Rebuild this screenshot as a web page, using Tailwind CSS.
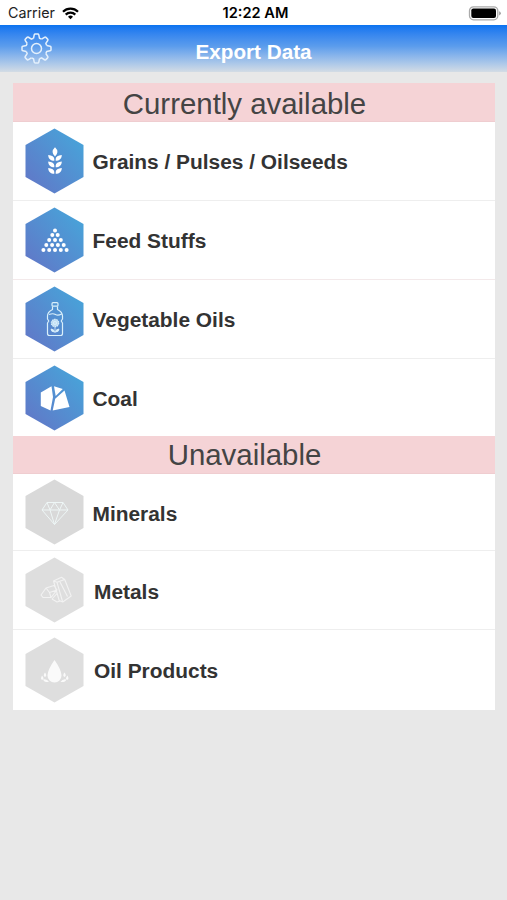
<!DOCTYPE html>
<html lang="en">
<head>
<meta charset="utf-8">
<title>Export Data</title>
<script src="https://cdn.jsdelivr.net/npm/@tailwindcss/browser@4"></script>
</head>
<body class="h-[900px] overflow-hidden bg-[#e8e8e8] font-['Liberation_Sans',sans-serif] text-[#333]">
<svg class="absolute h-0 w-0" aria-hidden="true">
  <defs>
    <linearGradient id="blue" x1="0" y1="1" x2="1" y2="0"><stop offset=".1" stop-color="#6079c8"/><stop offset=".9" stop-color="#48a3d9"/></linearGradient>
    <path id="hex" d="M29.500 .5 58.500 17v32L29.500 65.500.5 49V17Z"/>
    <path id="tooth" d="M-3-10.200-2.300-13.600Q-2.100-14.500-1.200-14.500H1.200Q2.100-14.500 2.300-13.600L3-10.200 5.090-9.330"/>
    <path id="leaf" d="M.7 3C.7.600 3-.800 6.800-1.100 6.800 2.600 4.300 4.700.7 4.700ZM-.7 3C-.7.600-3-.800-6.800-1.100-6.800 2.600-4.300 4.700-.7 4.700Z"/>
  </defs>
</svg>

<header class="grid h-[25px] grid-cols-3 items-center bg-white pt-[2px] pr-[6px] pl-2 font-['Inter',sans-serif] text-black">
  <div class="flex items-center gap-[7px] text-[14.300px] leading-none text-[#222]">
    <span>Carrier</span>
    <svg width="17" height="13" viewBox="0 0 17 13" fill="none" stroke="#000" stroke-width="2.200"><path d="M1 4.700a10.700 10.700 0 0 1 15 0M3.700 7.600a6.800 6.800 0 0 1 9.600 0"/><path d="M8.500 12.300 6 9.800a3.600 3.600 0 0 1 5 0Z" fill="#000" stroke="none"/></svg>
  </div>
  <div class="pl-[2px] text-center text-[14.600px] leading-none font-semibold whitespace-nowrap"><span>12:22 AM</span></div>
  <svg class="justify-self-end" width="33" height="15" viewBox="0 0 33 15"><rect x="1.500" y=".8" width="28.300" height="13" rx="4" fill="#fff" stroke="#aaa" stroke-width="1.300"/><rect x="3.300" y="2.600" width="24.700" height="9.500" rx="2" fill="#000"/><path d="M31.200 5.200q1.600.5 1.600 2.100t-1.600 2.100Z" fill="#999"/></svg>
</header>

<nav class="grid h-[47px] grid-cols-[73px_1fr_73px] items-center bg-linear-to-b from-[#0873f0] via-[#5b9cec] via-45% to-[#d3dce5]">
  <svg class="ml-[21px]" width="31" height="31" viewBox="-15.500 -15.500 31 31" fill="none" stroke="#e4f0fc" stroke-width="1.500" stroke-linejoin="round">
    <use href="#tooth"/><use href="#tooth" transform="rotate(45)"/><use href="#tooth" transform="rotate(90)"/><use href="#tooth" transform="rotate(135)"/><use href="#tooth" transform="rotate(180)"/><use href="#tooth" transform="rotate(225)"/><use href="#tooth" transform="rotate(270)"/><use href="#tooth" transform="rotate(315)"/>
    <circle r="5"/>
  </svg>
  <h1 class="pt-[6px] text-center text-[20.700px] leading-6 font-bold text-white">Export Data</h1>
</nav>

<main class="mx-auto mt-[11px] w-[482px] bg-white text-[20.900px] leading-6 font-bold">
  <h2 class="h-[39px] border-b border-[#efcdd0] bg-[#f5d3d6] pt-[4px] pr-[18px] text-center text-[29.400px] leading-[34px] font-normal text-[#444]">Currently available</h2>
  <ul>
    <li class="flex h-[79px] items-center gap-[9px] border-b border-[#eee] pb-px pl-[12px]">
      <svg width="59" height="66" viewBox="0 0 59 66"><use href="#hex" fill="url(#blue)"/><g fill="#fff"><path d="M30 19.200Q34.800 23.700 30 28.500 25.200 23.700 30 19.200Z"/><use href="#leaf" x="30" y="28"/><use href="#leaf" x="30" y="34.500"/><use href="#leaf" x="30" y="41"/></g></svg>
      <span class="pt-[2px]">Grains / Pulses / Oilseeds</span>
    </li>
    <li class="flex h-[79px] items-center gap-[9px] border-b border-[#f3e9ea] pb-px pl-[12px]">
      <svg width="59" height="66" viewBox="0 0 59 66"><use href="#hex" fill="url(#blue)"/><g fill="none" stroke="#fff" stroke-width="4" stroke-linecap="round"><path d="M30 23.500h.01M27.300 28h.01M32.700 28h.01M24.200 33h.01M30 33h.01M35.800 33h.01M21.300 38h.01M27.100 38h.01M32.900 38h.01M38.700 38h.01M18.400 43h.01M24.200 43h.01M30 43h.01M35.800 43h.01M41.600 43h.01"/></g></svg>
      <span class="pt-[2px]">Feed Stuffs</span>
    </li>
    <li class="flex h-[79px] items-center gap-[9px] border-b border-[#eee] pb-px pl-[12px]">
      <svg width="59" height="66" viewBox="0 0 59 66" fill="none" stroke="#d9effa" stroke-width="1.200" stroke-linejoin="round"><use href="#hex" fill="url(#blue)" stroke="none"/><rect x="27" y="16.700" width="6" height="3.500" rx="1"/><path d="M27.500 20.500v3Q22.500 26 22.500 30v3l1.300 2-1.300 2v10.500q0 2 2 2h11q2 0 2-2V37l-1.300-2 1.300-2v-3q0-4-5-6.500v-3M24 28.500q4-1.500 6.500 0t6-.5"/><circle cx="30" cy="37" r="3.700" fill="#bdddf4" stroke-dasharray="1.500 .8"/><circle cx="30" cy="37" r="1.500"/><path d="M30 41v6M29.500 46q-3.500 0-3.500-3 3 0 3.500 3ZM30.500 46q3.500 0 3.500-3-3 0-3.500 3Z" fill="#d9effa" stroke-width=".8"/></svg>
      <span class="pt-[2px]">Vegetable Oils</span>
    </li>
    <li class="flex h-[77px] items-center gap-[9px] pl-[12px]">
      <svg width="59" height="66" viewBox="0 0 59 66"><use href="#hex" fill="url(#blue)"/><path fill="#fff" d="M15.800 27.500 26.500 21.200 28 32 25.500 45.500 15.800 41ZM29 21.200 37.800 24 30.700 31ZM39.500 25.500 44.500 42 27.700 45.600 30.200 33.700Z"/></svg>
      <span class="pt-[2px]">Coal</span>
    </li>
  </ul>
  <h2 class="h-[38px] border-b border-[#efcdd0] bg-[#f5d3d6] pt-[2px] pr-[18px] text-center text-[29.400px] leading-[34px] font-normal text-[#444]">Unavailable</h2>
  <ul>
    <li class="flex h-[77px] items-center gap-[9px] border-b border-[#eee] pl-[12px]">
      <svg width="59" height="66" viewBox="0 0 59 66" fill="none" stroke="#eef6f6" stroke-width="1" stroke-linejoin="round"><use href="#hex" fill="#d9d9d9" stroke="none"/><path d="M22 23.500h16l5 7.500-13.500 14.500L17 31ZM17 31h26M22 23.500l3 7.500 4.500-7.500 5 7.500 3.500-7.500M25 31l4.500 14.500L34.500 31"/></svg>
      <span class="pt-[3px]">Minerals</span>
    </li>
    <li class="flex h-[79px] items-center gap-[10px] border-b border-[#eee] pl-[12.500px]">
      <svg width="59" height="66" viewBox="0 0 59 66" fill="none" stroke="#f2f2f2" stroke-width="1.100" stroke-linejoin="round"><use href="#hex" fill="#dedede" stroke="none"/><path d="m28.500 24 8-3.800 3.200 2.300 6.500 16.500-8.500 6-3.500-1.500ZM28.500 24l3.500 1.300 7.700-2.800M32 25.300 37.700 45M35 25l7.500 14.500M16 38l5-7 8-2.500 3 4.500-6 7.500H18ZM21 31l3.500 4.500L32 33M24.500 35.500 26 40.500M27 42l5-5.500M27 42l5 3 3-1"/></svg>
      <span class="pt-[3px]">Metals</span>
    </li>
    <li class="flex h-[80px] items-center gap-[10px] pb-px pl-[12.500px]">
      <svg width="59" height="66" viewBox="0 0 59 66" fill="#fafafa"><use href="#hex" fill="#dedede"/><path d="M29.500 23Q36.500 33 36.500 38.500a7 7 0 0 1-14 0Q22.500 33 29.500 23ZM20 35.500q2.500 3.500 0 4.500-2.500-1 0-4.500ZM39.500 35.500q2.500 3.500 0 4.500-2.500-1 0-4.500ZM17 38.500q2.800 3.500.4 4.200-2.500 0-.4-4.200ZM42.500 38.500q-2.800 3.500-.4 4.200 2.500 0 .4-4.200ZM18 42.500q4-1 6 2.500-5 .5-6-2.500ZM41.500 42.500q-4-1-6 2.500 5 .5 6-2.500Z"/></svg>
      <span class="pt-[2px]">Oil Products</span>
    </li>
  </ul>
</main>
</body>
</html>
